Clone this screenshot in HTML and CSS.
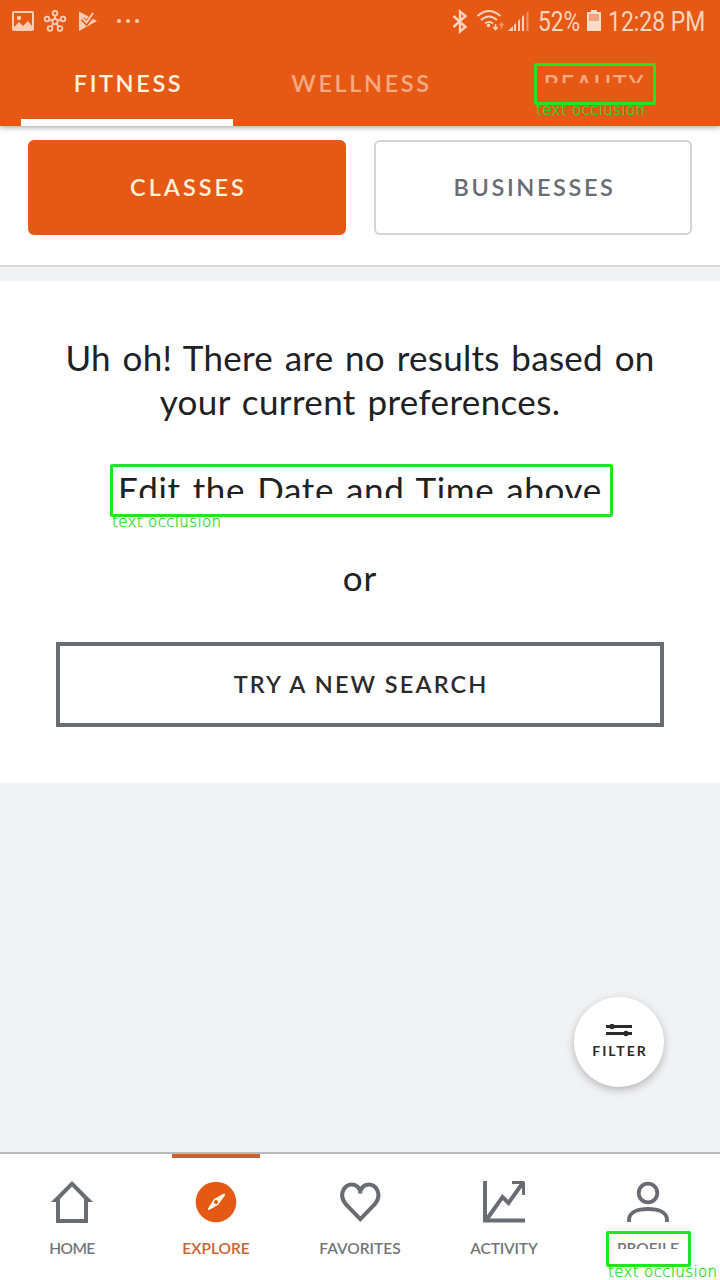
FILE: index.html
```html
<!DOCTYPE html>
<html lang="en">
<head>
<meta charset="utf-8">
<title>Explore</title>
<link rel="stylesheet" href="styles.css">
</head>
<body>
<div class="screen">
  <header class="header">
    <div class="status">
      <svg class="status-left" width="150" height="42" viewBox="0 0 150 42" fill="#fccdb3">
        <path fill-rule="evenodd" d="M14 11h18q2 0 2 2v16q0 2-2 2H14q-2 0-2-2V13q0-2 2-2zm0 2v14l5-5 4 4 5-5 4 5V13z"/><circle cx="19" cy="18" r="2.200"/>
        <g fill="none" stroke="#fccdb3" stroke-width="1.8">
          <circle cx="55" cy="21.500" r="2.600"/><circle cx="55" cy="13.300" r="2.300"/><circle cx="47" cy="19" r="2.300"/><circle cx="63" cy="19" r="2.300"/><circle cx="50" cy="28.500" r="2.300"/><circle cx="60" cy="28.500" r="2.300"/>
          <path d="M55 15.500v3.500M49.300 19.700l3.200 1M60.700 19.700l-3.200 1M51.500 26.500l2-2.500M58.500 26.500l-2-2.500"/>
        </g>
        <path d="M79 11.500l18 9.500-18 10z"/><path d="M82.500 19l4 4L95 12.500" fill="none" stroke="#e65915" stroke-width="4.500"/><path d="M83 19l3.500 3.500L93 13" fill="none" stroke="#fccdb3" stroke-width="2"/>
        <circle cx="119" cy="21" r="2"/><circle cx="128" cy="21" r="2"/><circle cx="137" cy="21" r="2"/>
      </svg>
      <div class="status-right">
        <svg width="80" height="42" viewBox="450 0 80 42">
          <path d="M454.500 16l12 11-5.500 4.500V11.500l5.500 4.500-12 11" fill="none" stroke="#fdd3bc" stroke-width="2.400"/>
          <g fill="none" stroke="#fdd3bc" stroke-width="2">
            <path d="M478.500 16q11.500-10 23 0M482 20q8-7 16 0M486 23.500q4-3 8 0"/>
            <path d="M496.500 24v5M494.300 27l2.200 2.500 2.200-2.500" stroke-width="1.600"/>
            <path d="M502.500 29v-6M500.500 25.500l2-2.500 2 2.500" stroke="#f2945f" stroke-width="1.600"/>
          </g>
          <circle cx="489.500" cy="25.500" r="1.800" fill="#fdd3bc"/>
          <path d="M509 31l5-5v5zM515 31v-6l2-2v8zM519 31V21l2-2v12zM523 31V17l2-2v16z" fill="#fdd3bc"/>
          <path d="M527.500 31V13l2-2v20z" fill="#f2945f"/>
        </svg>
        <span class="battery-text">52%</span>
        <svg class="battery" width="14" height="42" viewBox="0 0 14 42"><path d="M4 10h6v2h4v19H0V12h4z" fill="#fddccb"/><path d="M2 14h10v7H2z" fill="#f3a27a"/></svg>
        <span class="clock">12:28 PM</span>
      </div>
    </div>
    <nav class="tabs">
      <div class="tab tab-active"><span class="t-fitness">FITNESS</span></div>
      <div class="tab"><span class="t-wellness">WELLNESS</span></div>
      <div class="tab"><span class="t-beauty">BEAUTY</span></div>
    </nav>
  </header>

  <section class="switcher">
    <div class="choice choice-on"><span class="t-classes">CLASSES</span></div>
    <div class="choice"><span class="t-business">BUSINESSES</span></div>
  </section>

  <main class="empty">
    <p class="line"><span class="l1">Uh oh! There are no results based on</span></p>
    <p class="line"><span class="l2">your current preferences.</span></p>
    <p class="line line-cut"><span class="l3">Edit the Date and Time above</span></p>
    <p class="line line-or"><span>or</span></p>
    <div class="search"><span class="t-search">TRY A NEW SEARCH</span></div>
  </main>

  <div class="backdrop">
    <div class="filter">
      <svg width="26" height="13" viewBox="0 0 26 13" stroke="#2b2b2b" stroke-width="2.800" fill="#2b2b2b"><path d="M0 2.500h26M0 9.500h26"/><circle cx="6" cy="2.500" r="1.300"/><circle cx="20" cy="9.500" r="1.300"/></svg>
      <span class="t-filter">FILTER</span>
    </div>
  </div>

  <footer class="bottom">
    <div class="item">
      <svg width="44" height="44" viewBox="0 0 44 44"><path fill="#6a6c74" fill-rule="evenodd" d="M22 1l21 21h-5v21H6V22H1zm0 5.500L10 19v20h24V19z"/></svg>
      <span class="n-home">HOME</span>
    </div>
    <div class="item item-on">
      <svg width="44" height="44" viewBox="0 0 44 44"><circle cx="22" cy="22" r="20.300" fill="#e65915"/><path d="M31 14q-1-.8-2 0l-9 5-6 9.500q-.5 1.500 1 1.500l9-5 6.500-9q.8-1.200.5-2z" fill="#fff7e8"/><circle cx="22" cy="22" r="2" fill="#e65915"/></svg>
      <span class="n-explore">EXPLORE</span>
    </div>
    <div class="item">
      <svg width="44" height="44" viewBox="0 0 44 44" fill="none" stroke="#6a6c74" stroke-width="4"><path d="M22.300 39.200L8 24.500C0 15 6 4.500 14 4.500c4 0 8.300 3 8.300 9 0-6 4.300-9 8.300-9 8 0 14 10.500 6 20z"/></svg>
      <span class="n-favorites">FAVORITES</span>
    </div>
    <div class="item">
      <svg width="44" height="44" viewBox="0 0 44 44" fill="none" stroke="#6a6c74"><path d="M3 1v39.500h40" stroke-width="4"/><path d="M5 39l15.500-22 6 6L40 4" stroke-width="4"/><path d="M30 2.500h11.500V15" stroke-width="3" stroke-linejoin="round"/></svg>
      <span class="n-activity">ACTIVITY</span>
    </div>
    <div class="item">
      <svg width="44" height="44" viewBox="0 0 44 44" fill="none" stroke="#6a6c74" stroke-width="3.800"><circle cx="22" cy="13" r="9.300"/><path d="M3 42v-2c0-8 9-11 19-11s19 3 19 11v2"/></svg>
      <span class="n-profile">PROFILE</span>
    </div>
  </footer>

  <div class="mark mark-tab"><span>text occlusion</span></div>
  <div class="mark mark-line"><span>text occlusion</span></div>
  <div class="mark mark-nav"><span>text occlusion</span></div>
</div>
</body>
</html>
```
FILE: styles.css
```css
* { box-sizing: border-box; }
body { margin: 0; font-family: Lato, "Liberation Sans", sans-serif; }
svg { display: block; flex: none; }
span { white-space: nowrap; }
.screen { position: relative; width: 720px; height: 1280px; overflow: hidden; background: #f1f2f4; display: flex; flex-direction: column; }
.header { height: 126px; flex: none; background: #e65915; box-shadow: 0 1px 6px rgba(0,0,0,.4); z-index: 1; }
.status { height: 42px; display: flex; justify-content: space-between; }
.status-right { display: flex; align-items: center; padding-right: 14px; color: #fdd3bc; font: 27px/44px Roboto, sans-serif; }
.battery-text { width: 42px; margin: 2px 7px 0 9px; transform: scaleX(.84); transform-origin: left; }
.battery { margin-right: 7px; }
.clock { width: 98px; margin-top: 2px; transform: scaleX(.85); transform-origin: left; }
.tabs { height: 84px; display: flex; padding: 0 21px; justify-content: space-between; }
.tab { width: 212px; padding: 26px 0 0 3px; text-align: center; font-size: 23.5px; line-height: 30px; font-weight: 600; color: #f7a982; }
.tab span { display: inline-block; vertical-align: top; }
.tab-active { color: #fff3df; border-bottom: 7px solid #fff; }
.t-fitness, .t-wellness { letter-spacing: 2.6px; }
.t-beauty { height: 15px; overflow: hidden; letter-spacing: 1.8px; }
.switcher { height: 141px; flex: none; display: flex; gap: 28px; padding: 14px 28px 0; background: #fff; border-bottom: 2px solid #d8d9db; }
.choice { flex: 1; height: 95px; display: flex; align-items: center; justify-content: center; padding: 0 0 2px 3px; border: 2px solid #d2d4d5; border-radius: 6px; font-size: 23.5px; font-weight: 600; letter-spacing: 2.6px; color: #6a6c74; }
.choice-on { background: #e65915; border-color: #e65915; color: #fff0d8; letter-spacing: 3px; }
.empty { height: 502px; flex: none; margin-top: 14px; padding: 54px 56px 0; background: #fff; text-align: center; color: #202124; }
.line { margin: 0; font-size: 35px; line-height: 44px; height: 44px; word-spacing: 2.4px; }
.line span { display: inline-block; }
.l1 { letter-spacing: .28px; }
.l2 { letter-spacing: .37px; }
.l3 { letter-spacing: .65px; }
.line-cut { margin-top: 44px; height: 31px; overflow: hidden; }
.line-or { margin-top: 57px; letter-spacing: 1px; }
.search { height: 85px; margin-top: 43px; padding: 0 0 2px 2px; border: 4px solid #6a6c74; display: flex; align-items: center; justify-content: center; font-size: 23.5px; font-weight: 600; letter-spacing: 2.1px; color: #2b2b2b; }
.backdrop { flex: 1; display: flex; justify-content: flex-end; align-items: flex-end; padding: 0 56px 65px 0; }
.filter { width: 90px; height: 90px; border-radius: 50%; background: #fff; box-shadow: 0 3px 8px rgba(0,0,0,.25); display: flex; flex-direction: column; align-items: center; padding: 27px 0 0 0; font-size: 14px; line-height: 16px; font-weight: 700; letter-spacing: 2px; color: #2b2b2b; }
.t-filter { margin: 6px 0 0 2px; }
.bottom { height: 128px; flex: none; display: flex; background: #fff; border-top: 2px solid #b9babd; }
.item { flex: 1; display: flex; flex-direction: column; align-items: center; padding-top: 26px; font-size: 15.500px; line-height: 20px; font-weight: 600; color: #74757a; }
.item span { margin-top: 14px; }
.n-home { letter-spacing: -.6px; }
.n-activity { letter-spacing: -.15px; }
.item-on { color: #c8622f; background: linear-gradient(#c8622f, #c8622f) center top / 88px 4px no-repeat; }
.n-profile { height: 11px; overflow: hidden; }
.mark { position: absolute; z-index: 2; border: 3px solid #1fe61f; border-radius: 2px; color: #22dc22; font: 200 15px/16px "DejaVu Sans Light", "DejaVu Sans", sans-serif; letter-spacing: .35px; -webkit-text-stroke: .3px #22dc22; }
.mark span { position: absolute; top: 100%; left: -1px; }
.mark-tab { left: 534px; top: 63px; width: 122px; height: 42px; }
.mark-line { left: 110px; top: 464px; width: 503px; height: 53px; }
.mark-nav { left: 606px; top: 1231px; width: 85px; height: 36px; }
```
